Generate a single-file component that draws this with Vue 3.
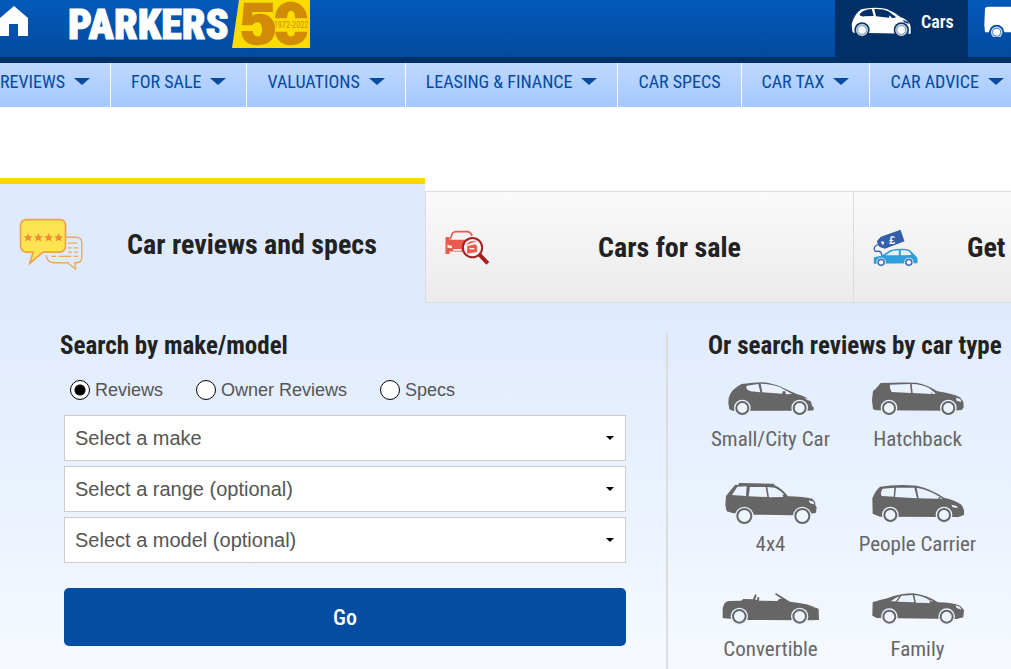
<script setup>
import { ref } from 'vue'

const navItems = [
  { label: 'REVIEWS', menu: true },
  { label: 'FOR SALE', menu: true },
  { label: 'VALUATIONS', menu: true },
  { label: 'LEASING & FINANCE', menu: true },
  { label: 'CAR SPECS', menu: false },
  { label: 'CAR TAX', menu: true },
  { label: 'CAR ADVICE', menu: true },
]

const searchType = ref('Reviews')
const searchTypes = ['Reviews', 'Owner Reviews', 'Specs']

const selects = [
  { id: 'make', label: 'Select a make' },
  { id: 'range', label: 'Select a range (optional)' },
  { id: 'model', label: 'Select a model (optional)' },
]

const carTypes = [
  {
    label: 'Small/City Car',
    box: '63 165 300 150',
    body: 'M88 268L85 250L86 235Q92 215 102 208Q112 198 125 192Q160 187 190 187Q222 190 250 204L290 222Q322 230 333 245L336 258L341 262V271L325 272H98Z',
    glass: 'M140 197L175 192L181 217L152 214Q135 209 140 197ZM182 191Q220 192 240 202L276 222L258 223L256 214L248 214L247 221L187 217ZM313 233L328 237L332 243L322 240Z',
    wheels: [[127, 264], [299, 264]],
    r: 18,
  },
  {
    label: 'Hatchback',
    box: '504 165 300 150',
    body: 'M519 268L516 240L519 213L526 208L542 189Q600 186 650 188Q680 193 712 214Q760 221 780 232L790 245L791 262L785 270L760 272L530 271Z',
    glass: 'M570 194L630 192L633 219L575 216Q567 205 570 194ZM635 192Q665 192 690 206L708 221L698 222L692 214L695 222L638 219ZM768 233L781 237L784 246L770 242Z',
    wheels: [[567, 264], [745, 264]],
    r: 18,
  },
  {
    label: '4x4',
    box: '63 30 300 150',
    body: 'M80 124L76 105L78 78L105 45L116 44V39L220 41L224 46Q245 55 264 79Q310 80 337 86L345 95L347 108L350 112L348 128L330 132L275 136L160 134L100 130Z',
    glass: 'M112 50L140 49L138 78L96 75ZM150 51L197 51L202 81L146 79ZM202 51L225 53Q240 60 253 74L247 74L250 81L207 82ZM326 91L341 95L343 103L330 100Z',
    wheels: [[133, 138], [307, 138]],
    r: 21,
  },
  {
    label: 'People Carrier',
    box: '504 30 300 150',
    body: 'M518 131L517 85Q525 63 540 50Q590 42 650 47Q690 55 732 83Q770 92 785 105L792 120V135L775 141L540 140Z',
    glass: 'M548 56L583 53L581 80L546 78Q538 72 548 56ZM588 53L643 53L651 85L585 81ZM650 53Q690 60 728 86L722 87L718 78L715 86L656 85ZM754 104L770 108L773 114L758 112Z',
    wheels: [[571, 135], [732, 135]],
    r: 18,
  },
  {
    label: 'Convertible',
    box: '63 30 300 150',
    body: 'M68 128L68 100Q72 81 85 78L123 77L130 72L159 73L165 58L170 60L166 74L171 75L173 65L178 67L177 77L232 78L238 71L246 72L224 57L229 55L270 80Q330 86 356 102L357 135L325 136L140 135L70 130Z',
    glass: 'M332 92L350 98L345 98Z',
    wheels: [[118, 124], [299, 124]],
    r: 19,
  },
  {
    label: 'Family',
    box: '504 30 300 150',
    body: 'M517 122L518 82Q540 75 562 70Q600 55 640 55Q680 60 714 82Q760 83 780 92L792 105L790 127L770 132L530 129Z',
    glass: 'M598 64L588 79L572 79Q584 69 598 64ZM604 62L638 60L643 82L592 80ZM643 60Q672 63 700 82L693 75L688 76L690 84L648 83ZM766 91L779 95L785 104L770 99Z',
    wheels: [[568, 125], [740, 125]],
    r: 18,
  },
]
</script>

<template>
  <div class="page">
    <header class="masthead">
      <a class="home" href="#" aria-label="Home">
        <svg viewBox="0 0 29 31" width="29" height="31"><path d="M0 12L14 0L28 12V30H18V18H9V30H0Z" fill="#fff" /></svg>
      </a>
      <a class="brand" href="#">
        <span class="brand-name">PARKERS</span>
        <svg class="fifty" viewBox="0 0 235 144" width="78" height="48">
          <path d="M21 0H235V144H0Z" fill="#fbdc00" />
          <path d="M36 8H123V36H62L60 48Q70 40 86 41Q128 44 130 88Q128 134 78 136Q30 135 28 93H63Q64 109 77 110Q90 109 91 89Q90 68 77 67Q66 67 61 76H30Z" fill="#d28b07" />
          <path d="M130 55Q132 8 177 4Q222 8 227 55H190Q190 33 178 32Q166 33 166 55ZM130 95H166Q167 109 178 110Q189 109 190 95H227Q222 133 177 136Q135 133 130 95Z" fill="#d28b07" />
          <text x="178" y="85" text-anchor="middle" class="years">1972-2022</text>
        </svg>
      </a>
      <div class="vehicle-tabs">
        <a class="vehicle active" href="#">
          <svg viewBox="90 15 186 96" width="62" height="32">
            <path d="M97 94L95 72Q103 42 124 28Q160 19 200 27Q222 36 241 51Q268 61 272 80V101L100 98Z" fill="#fff" />
            <path d="M119 43Q127 29 155 27L161 48L133 49Q119 50 119 43ZM163 27Q188 26 205 34L229 52L217 55L209 46L207 53L168 49ZM247 59L264 66L266 72L253 67Z" fill="#013066" />
            <g v-for="x in [126, 244]" :key="x">
              <circle :cx="x" cy="90" r="23" fill="#013066" />
              <circle :cx="x" cy="90" r="16" fill="#fff" stroke="#bac9db" stroke-width="5" />
              <circle :cx="x" cy="90" r="13" fill="none" stroke="#52739b" stroke-width="2" />
            </g>
          </svg>
          <span>Cars</span>
        </a>
        <a class="vehicle van" href="#" aria-label="Vans">
          <svg viewBox="0 0 81 96" width="27" height="32">
            <path d="M3 10Q5 5 12 5H81V82H3L1 60Z" fill="#fff" />
            <circle cx="38" cy="82" r="23" fill="#034fa7" />
            <circle cx="38" cy="82" r="15" fill="#fff" stroke="#bfd4ed" stroke-width="5" />
            <circle cx="38" cy="82" r="12" fill="none" stroke="#4c82c3" stroke-width="3" />
          </svg>
        </a>
      </div>
    </header>

    <nav class="main-nav">
      <a v-for="item in navItems" :key="item.label" href="#">
        {{ item.label }}<i v-if="item.menu" class="arrow"></i>
      </a>
    </nav>

    <main>
      <div class="tabs">
        <a class="tab current" href="#">
          <svg viewBox="58 146 192 160" width="64" height="53">
            <g fill="none" stroke="#eba75b" stroke-width="4">
              <path d="M200 204H230Q247 205 247 222V262Q247 280 232 281H226L228 300L204 281H160Q141 278 139 258" />
              <path d="M205 222H234M205 236H216M222 236H235M205 249H217M224 249H235M155 262H169M176 262H215M222 262H235" />
            </g>
            <path d="M78 151H182Q198 153 198 168V230Q197 248 181 249H130L90 283L100 249H78Q63 247 62 230V168Q63 153 78 151Z" fill="#fee352" stroke="#efa14b" stroke-width="5" />
            <path v-for="x in [85, 116, 147, 177]" :key="x" :transform="`translate(${x} 205)`" d="M0-14L4-4L13-4L6 3L9 12L0 7L-9 12L-6 3L-13-4L-4-4Z" fill="#f08b33" />
          </svg>
          <span>Car reviews and specs</span>
        </a>
        <a class="tab" href="#">
          <svg class="small-icon" viewBox="77 146 134 108" width="45" height="36">
            <path d="M92 174L99 155Q103 151 110 151H145Q153 152 158 164" fill="none" stroke="#e85b4d" stroke-width="5" />
            <path d="M78 167H89L91 175H145L132 193L136 211L78 210ZM78 209H90V218H78ZM142 208H171V218H142Z" fill="#e85b4d" />
            <path d="M84 190L98 194L97 201L84 199ZM101 203H126V208H101Z" fill="#f4f4f4" />
            <path d="M177 217L205 246" stroke="#a91e1d" stroke-width="12" />
            <circle cx="159" cy="199" r="29" fill="#f4f4f4" stroke="#a52222" stroke-width="6" />
            <path d="M141 190Q150 178 171 180M144 195L166 190L172 194V211L144 216Z" fill="#e85b4d" stroke="#e85b4d" stroke-width="2" />
            <path d="M150 202H164" stroke="#f4f4f4" stroke-width="4" />
          </svg>
          <span>Cars for sale</span>
        </a>
        <a class="tab partial" href="#">
          <svg class="small-icon" viewBox="101 146 134 114" width="45" height="38">
            <path d="M103 250V231L126 226L153 209Q190 202 211 209L229 227L234 234V249Z" fill="#2f9fdb" />
            <path d="M138 225L158 212L178 210V225ZM184 210Q200 209 210 214L216 224L184 225Z" fill="#e9f2f7" />
            <path d="M112 183L124 169L183 148L195 183L136 205L119 199Z" fill="#355fab" />
            <circle cx="129" cy="188" r="5" fill="#f4f4f4" />
            <path d="M128 190Q107 192 104 204Q104 215 114 213Q126 211 127 226" fill="none" stroke="#355fab" stroke-width="4" />
            <text x="158" y="191" text-anchor="middle" class="pound">£</text>
            <g v-for="x in [125, 208]" :key="x">
              <circle :cx="x" cy="246" r="14" fill="#f4f4f4" />
              <circle :cx="x" cy="246" r="9" fill="#fff" stroke="#4872b5" stroke-width="5" />
            </g>
          </svg>
          <span>Get</span>
        </a>
      </div>

      <div class="panel">
        <form class="search" @submit.prevent>
          <h2>Search by make/model</h2>
          <div class="radios">
            <label v-for="type in searchTypes" :key="type">
              <input v-model="searchType" type="radio" name="search-type" :value="type" />{{ type }}
            </label>
          </div>
          <div class="fields">
            <div v-for="field in selects" :key="field.id" class="field">
              <select :id="field.id" :aria-label="field.label">
                <option>{{ field.label }}</option>
              </select>
            </div>
            <button type="submit">Go</button>
          </div>
        </form>

        <section class="types">
          <h2>Or search reviews by car type</h2>
          <div class="type-grid">
            <a v-for="car in carTypes" :key="car.label" href="#">
              <svg :viewBox="car.box" width="100" height="50">
                <path :d="car.body" fill="#666" />
                <path :d="car.glass" fill="#ebf2ff" />
                <g v-for="wheel in car.wheels" :key="wheel[0]">
                  <circle :cx="wheel[0]" :cy="wheel[1]" :r="car.r + 7" fill="#e9f1ff" />
                  <circle :cx="wheel[0]" :cy="wheel[1]" :r="car.r" fill="#edf3ff" stroke="#666" stroke-width="6" />
                </g>
              </svg>
              <span>{{ car.label }}</span>
            </a>
          </div>
        </section>
      </div>
    </main>
  </div>
</template>

<style>
body {
  margin: 0;
}
</style>

<style scoped>
.page {
  min-height: 100vh;
  display: flex;
  flex-direction: column;
  overflow: hidden;
  background: #fff;
  font-family: "Roboto Condensed", "Liberation Sans Narrow", Roboto, sans-serif;
  color: #222;
}
* {
  box-sizing: border-box;
}
a {
  color: inherit;
  text-decoration: none;
}
svg {
  display: block;
  flex: none;
}
.masthead {
  display: flex;
  height: 63px;
  border-bottom: 6px solid #013066;
  background: linear-gradient(#0459ba, #034b9f);
}
.home {
  padding-top: 6px;
}
.brand {
  display: flex;
  margin-left: 39px;
  color: #fff;
}
.brand-name {
  width: 164px;
  font-size: 42px;
  line-height: 49px;
  font-weight: 900;
  -webkit-text-stroke: 1px #fff;
}
.years {
  font-size: 25px;
  fill: #d28b07;
}
.vehicle-tabs {
  display: flex;
  margin-left: auto;
  height: 63px;
}
.vehicle {
  display: flex;
  width: 133px;
  gap: 9px;
  padding: 5px 0 0 15px;
  font-size: 18px;
  line-height: 34px;
  font-weight: 600;
  color: #fff;
}
.vehicle.active {
  background: #013066;
}
.vehicle.van {
  width: 43px;
  padding-left: 16px;
}
.main-nav {
  display: flex;
  height: 44px;
  background: linear-gradient(#bed8ff, #a5c8ff);
  font-size: 18px;
  line-height: 38px;
  color: #034b9f;
  white-space: nowrap;
}
.main-nav a {
  display: flex;
  align-items: flex-start;
  padding: 0 20px;
  border-right: 1px solid #fff;
}
.main-nav a:first-child {
  padding-left: 0;
}
.main-nav a:last-child {
  border: 0;
}
.arrow {
  margin: 15px 0 0 9px;
  border: 8px solid transparent;
  border-top: 7px solid #034b9f;
  border-bottom: 0;
}
main {
  flex: 1;
  display: flex;
  flex-direction: column;
  margin-top: 71px;
}
.tabs {
  display: grid;
  grid-template-columns: 425fr 428fr 158fr;
  align-items: end;
  height: 125px;
}
.tab {
  display: flex;
  align-items: center;
  min-width: 0;
  height: 112px;
  padding: 2px 23px 0 19px;
  border: 1px solid #dcdcdc;
  border-right: 0;
  background: linear-gradient(#fafafa, #ebebeb);
  font-size: 28px;
  line-height: 32px;
  font-weight: 700;
  white-space: nowrap;
}
.tab span {
  flex: 1;
  text-align: center;
}
.tab.current {
  height: 125px;
  padding-right: 4px;
  border: 0;
  border-top: 6px solid #ffd400;
  background: #dfeafd;
}
.small-icon {
  margin-right: 19px;
}
.tab.partial {
  padding-right: 0;
}
.tab.partial span {
  padding-left: 30px;
  text-align: left;
}
.panel {
  flex: 1;
  display: grid;
  grid-template-columns: 668fr 343fr;
  background: linear-gradient(#dfeafe, #e5efff 30%, #f6f9ff);
}
.search,
.types {
  margin-top: 29px;
}
.search {
  padding: 0 40px 23px 60px;
  border-right: 2px solid #dcdcdc;
}
h2 {
  margin: 0;
  font-size: 25px;
  line-height: 28px;
  font-weight: 700;
  white-space: nowrap;
}
.radios {
  display: flex;
  gap: 33px;
  margin: 20px 0 15px 10px;
  font: 18px/20px "Liberation Sans", Arial, sans-serif;
  color: #555;
}
.radios label {
  display: flex;
  gap: 5px;
}
.radios input {
  appearance: none;
  width: 20px;
  height: 20px;
  margin: 0;
  border: 1px solid #000;
  border-radius: 50%;
  background: #fff;
}
.radios input:checked {
  background: radial-gradient(circle, #000 5px, #fff 6px);
}
.fields {
  display: grid;
  gap: 5px;
  margin-left: 4px;
}
.field {
  position: relative;
}
.field::after {
  content: "";
  position: absolute;
  top: 21px;
  right: 12px;
  border: 4px solid transparent;
  border-top-color: #000;
  border-bottom: 0;
  pointer-events: none;
}
select {
  appearance: none;
  display: block;
  width: 100%;
  height: 46px;
  padding: 0 10px;
  border: 1px solid #ccc;
  border-radius: 0;
  background: #fff;
  font: 20px "Liberation Sans", Arial, sans-serif;
  color: #555;
}
button {
  height: 58px;
  margin-top: 20px;
  border: 0;
  border-radius: 5px;
  background: #034da2;
  font: 500 22px "Roboto Condensed", "Liberation Sans Narrow", Roboto, sans-serif;
  color: #fff;
}
.types h2 {
  padding-left: 40px;
}
.type-grid {
  display: grid;
  grid-template-columns: 147px 147px;
  row-gap: 27px;
  margin: 15px 0 0 29px;
}
.type-grid a {
  display: flex;
  flex-direction: column;
  align-items: center;
  font-size: 21px;
  line-height: 28px;
  color: #666;
  white-space: nowrap;
}
.pound {
  font: 700 32px "Liberation Sans", sans-serif;
  fill: #fff;
}
</style>
